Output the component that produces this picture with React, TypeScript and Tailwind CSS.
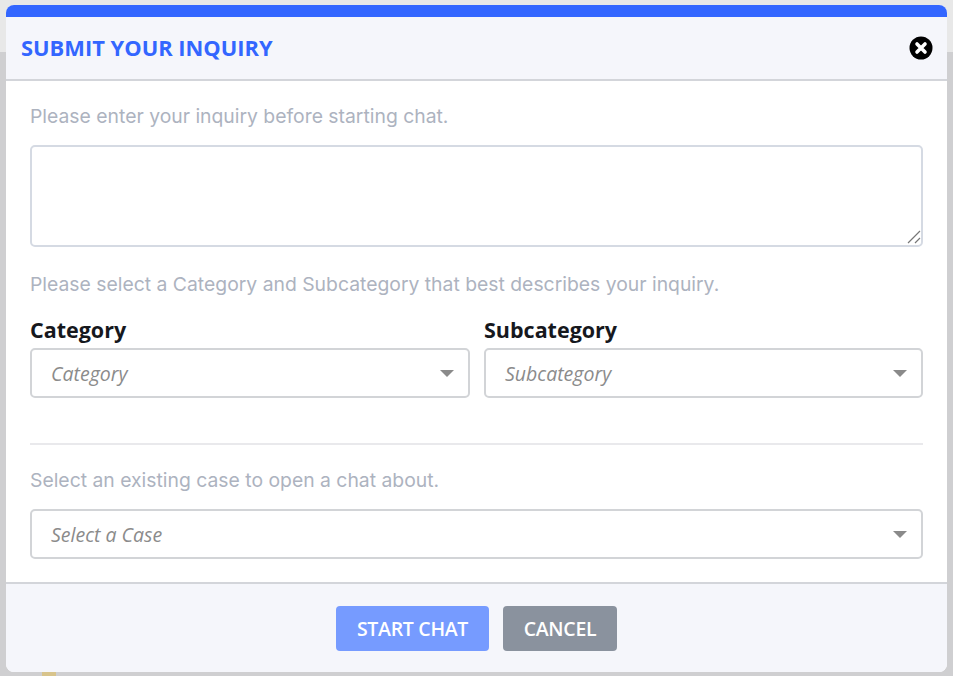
const labelClass = "text-[21.5px] leading-[26px] font-bold text-[#16181d] font-['Open_Sans',sans-serif]";
const hintClass = "text-[19.35px] leading-[26px] text-[#adb3bf] font-['Inter',sans-serif]";

const Caret = () => (
  <svg width="14" height="7" viewBox="0 0 14 7" className="shrink-0">
    <path d="M0 0h14L7 7z" fill="#8a8a8a" />
  </svg>
);

const SelectBox = ({ placeholder }: { placeholder: string }) => (
  <div className="flex h-[50px] items-center justify-between rounded-[5px] border-2 border-[#d2d4d7] bg-white pl-[19px] pr-[14px]">
    <span className="pt-[2px] text-[19.5px] italic text-[#8b8b8b] font-['Open_Sans',sans-serif]">{placeholder}</span>
    <Caret />
  </div>
);

export default function App() {
  return (
    <div className="relative h-[676px] w-[953px] overflow-hidden bg-[#cfcfd1]">
      <div className="h-[52px] bg-[#e8e8e8]" />
      <div className="absolute bottom-0 left-[42px] h-[4px] w-[14px] bg-[#d8c48c]" />

      <div className="absolute left-[6px] top-[5px] flex h-[667px] w-[941px] flex-col overflow-hidden rounded-[8px] bg-white">
        <div className="h-[12px] shrink-0 bg-[#3366ff]" />

        <div className="flex h-[64px] shrink-0 items-center justify-between border-b-2 border-[#d3d5da] bg-[#f5f6fb] pl-[15px] pr-[14px]">
          <h1 className="text-[21.9px] font-bold text-[#3366ff] font-['Open_Sans',sans-serif]">SUBMIT YOUR INQUIRY</h1>
          <svg width="24" height="24" viewBox="0 0 24 24">
            <circle cx="12" cy="12" r="11.5" fill="#000" />
            <path d="M8 8l8 8M16 8l-8 8" stroke="#fff" strokeWidth="3.6" strokeLinecap="round" />
          </svg>
        </div>

        <div className="flex flex-1 flex-col px-[24px] pt-[22px]">
          <p className={hintClass}>Please enter your inquiry before starting chat.</p>
          <div className="relative mt-[16px] h-[102px]">
            <textarea className="h-full w-full resize-none rounded-[5px] border-2 border-[#d5dae3] bg-white" />
            <svg width="14" height="14" viewBox="0 0 14 14" className="absolute bottom-[3px] right-[2px]">
              <path d="M1 13L13 1M8 13l5-5" stroke="#777" strokeWidth="1.2" fill="none" />
            </svg>
          </div>
          <p className={`mt-[24px] ${hintClass}`}>Please select a Category and Subcategory that best describes your inquiry.</p>

          <div className="mt-[20px] grid grid-cols-[440px_439px] gap-[14px]">
            <div>
              <div className={labelClass}>Category</div>
              <div className="mt-[5px]"><SelectBox placeholder="Category" /></div>
            </div>
            <div>
              <div className={labelClass}>Subcategory</div>
              <div className="mt-[5px]"><SelectBox placeholder="Subcategory" /></div>
            </div>
          </div>

          <div className="mt-[45px] h-[2px] bg-[#e9e9ec]" />
          <p className={`mt-[22px] ${hintClass}`}>Select an existing case to open a chat about.</p>
          <div className="mt-[16px]"><SelectBox placeholder="Select a Case" /></div>
        </div>

        <div className="flex h-[90px] shrink-0 items-start justify-center gap-[14px] border-t-2 border-[#d3d5da] bg-[#f5f6fb] pt-[21px]">
          <button className="mt-[1px] h-[45px] w-[153px] rounded-[4px] bg-[#769bff] text-[19.5px] font-semibold tracking-[-0.3px] text-white font-['Open_Sans',sans-serif]">START CHAT</button>
          <button className="mt-[1px] h-[45px] w-[114px] rounded-[4px] bg-[#8a929e] text-[19.5px] font-semibold tracking-[-0.3px] text-white font-['Open_Sans',sans-serif]">CANCEL</button>
        </div>
      </div>
    </div>
  );
}
